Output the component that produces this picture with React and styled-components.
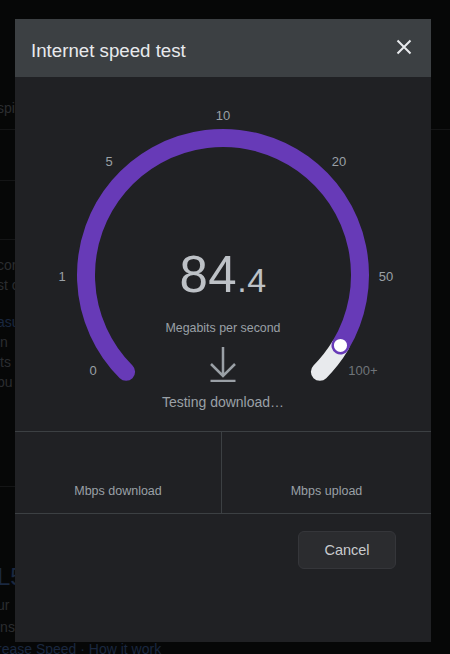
import React from 'react';
import styled, { createGlobalStyle } from 'styled-components';

const GlobalStyle = createGlobalStyle`
  html, body {
    margin: 0;
    padding: 0;
    background: #060707;
  }
  body {
    font-family: 'Liberation Sans', Arial, sans-serif;
    overflow: hidden;
  }
`

const Page = styled.div`
  position: relative;
  width: 450px;
  height: 654px;
  overflow: hidden;
  background: #060707;
`

const TopArea = styled.div`
  height: 130px;
  box-sizing: border-box;
  padding-top: 98px;
  border-bottom: 1px solid #141516;
`

const Column = styled.div`
  width: 300px;
  margin-left: -3px;
`

const Block = styled.div`
  height: ${({h}) => h}px;
  box-sizing: border-box;
  padding-top: ${({pt}) => pt || 0}px;
  border-bottom: ${({line}) => line ? '1px solid #141516' : 'none'};
`

const Fragment = styled.div`
  font-size: ${({big}) => big ? 24 : 14}px;
  line-height: ${({lh}) => lh || 20}px;
  color: ${({link}) => link ? '#1a2840' : '#2b2d30'};
  white-space: nowrap;
`

const Dialog = styled.div`
  position: absolute;
  left: 15px;
  top: 19px;
  width: 416px;
  height: 623px;
  background: #202124;
  display: flex;
  flex-direction: column;
`

const Header = styled.div`
  height: 58px;
  box-sizing: border-box;
  background: #3c4043;
  display: flex;
  justify-content: space-between;
  align-items: flex-start;
  padding: 21px 19px 0 16px;
`

const Title = styled.h2`
  margin: 0;
  font-size: 18.7px;
  line-height: 22px;
  font-weight: 400;
  color: #e8eaed;
`

const CloseButton = styled.button`
  background: none;
  border: 0;
  padding: 0;
  width: 16px;
  height: 16px;
  margin-top: -1px;
  display: flex;
  cursor: pointer;
`

const GaugeArea = styled.div`
  height: 354px;
  display: grid;
  & > * {
    grid-area: 1 / 1;
  }
`

const Readout = styled.div`
  justify-self: center;
  display: flex;
  flex-direction: column;
  align-items: center;
  padding-top: 173px;
  color: #9aa0a6;
`

const Speed = styled.div`
  font-size: 51px;
  line-height: 50px;
  color: #bdc1c6;
  letter-spacing: 0.5px;
`

const Decimal = styled.span`
  font-size: 34px;
`

const Unit = styled.div`
  margin-top: 15px;
  font-size: 12.4px;
  line-height: 16px;
`

const DownloadIcon = styled.svg`
  margin-top: 10px;
  display: block;
`

const Status = styled.div`
  margin-top: 11px;
  font-size: 14px;
  line-height: 18px;
`

const Stats = styled.div`
  display: grid;
  grid-template-columns: 207px 1fr;
  border-top: 1px solid #3c4043;
  border-bottom: 1px solid #3c4043;
`

const StatCell = styled.div`
  height: 81px;
  box-sizing: border-box;
  display: flex;
  flex-direction: column;
  justify-content: flex-end;
  align-items: center;
  padding-bottom: 14px;
  border-right: ${({divider}) => divider ? '1px solid #3c4043' : 'none'};
`

const StatLabel = styled.div`
  font-size: 12.5px;
  line-height: 16px;
  color: #9aa0a6;
`

const Footer = styled.div`
  flex: 1;
  display: flex;
  justify-content: flex-end;
  align-items: flex-start;
  padding: 17px 35px 0 0;
`

const Button = styled.button`
  width: 98px;
  height: 38px;
  border-radius: 6px;
  background: #2b2c2f;
  border: 1px solid #35363a;
  color: #c8cacd;
  font-family: 'Liberation Sans', Arial, sans-serif;
  font-size: 14.5px;
  cursor: pointer;
`

const CX = 208
const CY = 198
const R = 137

const ticks = [
  { label: '0', value: 0, x: 78, y: 293 },
  { label: '1', value: 1, x: 47, y: 199 },
  { label: '5', value: 5, x: 94, y: 84 },
  { label: '10', value: 10, x: 208, y: 38 },
  { label: '20', value: 20, x: 324, y: 84 },
  { label: '50', value: 50, x: 371, y: 199 },
  { label: '100+', value: 100, x: 348, y: 293, dim: true },
]

const polar = deg => {
  const a = deg * Math.PI / 180
  return [CX + R * Math.cos(a), CY + R * Math.sin(a)]
}

// ticks are 45deg apart starting at 135deg (bottom left), linear between ticks
const angleFor = v => {
  for (let i = 1; i < ticks.length; i++) {
    const lo = ticks[i - 1].value
    const hi = ticks[i].value
    if (v <= hi) return 135 + 45 * (i - 1) + 45 * (v - lo) / (hi - lo)
  }
  return 405
}

const arc = (from, to) => {
  const [x1, y1] = polar(from)
  const [x2, y2] = polar(to)
  const large = to - from > 180 ? 1 : 0
  return `M ${x1} ${y1} A ${R} ${R} 0 ${large} 1 ${x2} ${y2}`
}

const Gauge = ({ value }) => {
  const angle = angleFor(value)
  const [kx, ky] = polar(angle)
  return (
    <svg width="416" height="354" viewBox="0 0 416 354">
      <path d={arc(angle, 405)} fill="none" stroke="#e8eaed" strokeWidth="18" strokeLinecap="round" />
      <path d={arc(135, angle)} fill="none" stroke="#673ab7" strokeWidth="18" strokeLinecap="round" />
      <circle cx={kx} cy={ky} r="7.3" fill="#ffffff" stroke="#673ab7" strokeWidth="1.5" />
      {ticks.map(t => (
        <text
          key={t.label}
          x={t.x}
          y={t.y}
          textAnchor="middle"
          dominantBaseline="central"
          fontFamily="'Liberation Sans', Arial, sans-serif"
          fontSize="13"
          fill={t.dim ? '#6f7479' : '#9aa0a6'}
        >
          {t.label}
        </text>
      ))}
    </svg>
  )
}

const App = () => {
  const speed = 84.4
  const [whole, frac] = speed.toFixed(1).split('.')

  return (
    <Page>
      <GlobalStyle />
      <TopArea>
        <Column>
          <Fragment>spin</Fragment>
        </Column>
      </TopArea>
      <Column>
        <Block h={51} line />
        <Block h={59} line />
        <Block h={247} pt={15} line>
          <Fragment>con</Fragment>
          <Fragment>st c</Fragment>
          <Block h={17} />
          <Fragment link>asu</Fragment>
          <Fragment>in</Fragment>
          <Fragment>lts</Fragment>
          <Fragment>bu</Fragment>
        </Block>
        <Block h={180} pt={76}>
          <Fragment big link lh={28}>L5</Fragment>
          <Block h={3} />
          <Fragment lh={22}>ur</Fragment>
          <Fragment lh={22}>ins</Fragment>
          <Fragment link lh={22}>rease Speed · How it work</Fragment>
        </Block>
      </Column>

      <Dialog role="dialog">
        <Header>
          <Title>Internet speed test</Title>
          <CloseButton aria-label="Close">
            <svg width="16" height="16" viewBox="0 0 16 16">
              <path d="M1.5 1.5 L14.5 14.5 M14.5 1.5 L1.5 14.5" stroke="#e8eaed" strokeWidth="2" />
            </svg>
          </CloseButton>
        </Header>

        <GaugeArea>
          <Gauge value={speed} />
          <Readout>
            <Speed>{whole}<Decimal>.{frac}</Decimal></Speed>
            <Unit>Megabits per second</Unit>
            <DownloadIcon width="28" height="36" viewBox="0 0 28 36">
              <path d="M14 1 V30 M2 18 L14 30 L26 18 M1.5 35 H26.5" fill="none" stroke="#9aa0a6" strokeWidth="2.5" />
            </DownloadIcon>
            <Status>Testing download…</Status>
          </Readout>
        </GaugeArea>

        <Stats>
          <StatCell divider>
            <StatLabel>Mbps download</StatLabel>
          </StatCell>
          <StatCell>
            <StatLabel>Mbps upload</StatLabel>
          </StatCell>
        </Stats>

        <Footer>
          <Button>Cancel</Button>
        </Footer>
      </Dialog>
    </Page>
  )
}

export default App
